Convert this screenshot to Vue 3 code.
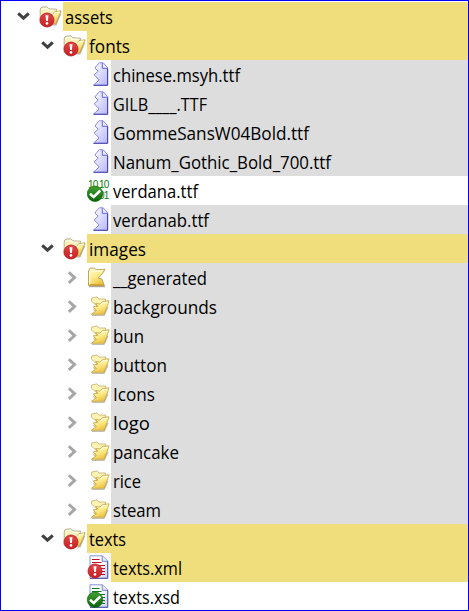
<script setup>
const rows = [
  { name: 'assets', level: 0, icon: 'open', tone: 'gold', arrow: 'down', width: 48 },
  { name: 'fonts', level: 1, icon: 'open', tone: 'gold', arrow: 'down', width: 41 },
  { name: 'chinese.msyh.ttf', level: 2, icon: 'torn', tone: 'gray', width: 127 },
  { name: 'GILB____.TTF', level: 2, icon: 'torn', tone: 'gray', width: 94 },
  { name: 'GommeSansW04Bold.ttf', level: 2, icon: 'torn', tone: 'gray', width: 196 },
  { name: 'Nanum_Gothic_Bold_700.ttf', level: 2, icon: 'torn', tone: 'gray', width: 218 },
  { name: 'verdana.ttf', level: 2, icon: 'binary', tone: 'plain', width: 85 },
  { name: 'verdanab.ttf', level: 2, icon: 'torn', tone: 'gray', width: 96 },
  { name: 'images', level: 1, icon: 'open', tone: 'gold', arrow: 'down', width: 57 },
  { name: '__generated', level: 2, icon: 'closed', tone: 'gray', arrow: 'right', width: 94 },
  { name: 'backgrounds', level: 2, icon: 'folder', tone: 'gray', arrow: 'right', width: 104 },
  { name: 'bun', level: 2, icon: 'folder', tone: 'gray', arrow: 'right', width: 31 },
  { name: 'button', level: 2, icon: 'folder', tone: 'gray', arrow: 'right', width: 54 },
  { name: 'Icons', level: 2, icon: 'folder', tone: 'gray', arrow: 'right', width: 42 },
  { name: 'logo', level: 2, icon: 'folder', tone: 'gray', arrow: 'right', width: 37 },
  { name: 'pancake', level: 2, icon: 'folder', tone: 'gray', arrow: 'right', width: 66 },
  { name: 'rice', level: 2, icon: 'folder', tone: 'gray', arrow: 'right', width: 28 },
  { name: 'steam', level: 2, icon: 'folder', tone: 'gray', arrow: 'right', width: 48 },
  { name: 'texts', level: 1, icon: 'open', tone: 'gold', arrow: 'down', width: 37 },
  { name: 'texts.xml', level: 2, icon: 'xml', tone: 'gold', width: 69 },
  { name: 'texts.xsd', level: 2, icon: 'xsd', tone: 'plain', width: 67 }
]
const hasError = (icon) => icon === 'open' || icon === 'xml'
const hasCheck = (icon) => icon === 'binary' || icon === 'xsd'
</script>

<template>
  <div class="tree">
    <svg class="defs" width="0" height="0" aria-hidden="true">
      <defs>
        <linearGradient id="paper" x1="0" y1="0" x2="1" y2="1">
          <stop offset="0" stop-color="#ffffff" /><stop offset="1" stop-color="#b5b5ff" />
        </linearGradient>
        <linearGradient id="page" x1="0" y1="0" x2="1" y2="1">
          <stop offset="0.4" stop-color="#ffffff" /><stop offset="1" stop-color="#ccd2fa" />
        </linearGradient>
        <linearGradient id="yellow" x1="0" y1="0" x2="0.5" y2="1">
          <stop offset="0" stop-color="#fffbd0" /><stop offset="0.55" stop-color="#fdec8a" /><stop offset="1" stop-color="#edc443" />
        </linearGradient>
        <linearGradient id="red" x1="0" y1="0" x2="0" y2="1">
          <stop offset="0" stop-color="#e04848" /><stop offset="1" stop-color="#c41f24" />
        </linearGradient>
        <linearGradient id="green" x1="0" y1="0" x2="0" y2="1">
          <stop offset="0" stop-color="#43a035" /><stop offset="1" stop-color="#0b6208" />
        </linearGradient>
      </defs>
    </svg>
    <div v-for="row in rows" :key="row.name" class="row" :class="'level-' + row.level">
      <svg class="arrow" width="24" height="29" viewBox="0 0 24 29">
        <path v-if="row.arrow === 'down'" class="down" d="M3.2 11.3 8.5 16.2 13.8 11.3" />
        <path v-if="row.arrow === 'right'" class="right" d="M5.8 9.3 11.6 14.6 5.8 19.9" />
      </svg>
      <svg class="icon" width="24" height="29" viewBox="0 0 24 29">
        <g v-if="row.icon === 'open'">
          <path d="M1.2 21V8Q1.2 5.5 3 5.2L8 4.8L10 6.8L17.6 7.2V20H3Z" fill="#faf0b9" stroke="#a9a084" stroke-width=".8" />
          <path d="M2.5 8Q3.5 6.3 7.5 6.3L9.5 8.3H15" fill="none" stroke="#fffde9" stroke-width="1.2" />
          <path d="M13 22.8H17L21.6 12" fill="none" stroke="#bdb8a9" stroke-width="1.2" />
          <path d="M9 12.8H13.5L16 9.6 22.1 8.8 16.7 22H8Z" fill="url(#yellow)" stroke="#ad8c38" stroke-width=".7" />
          <path d="M14 13.1 16.5 10.7 20.5 10.2" fill="none" stroke="#fffbd8" stroke-width="1.3" />
        </g>
        <g v-else-if="row.icon === 'folder'">
          <path d="M5 23.4H17L21 15" fill="none" stroke="#c3bfb5" stroke-width="1.2" />
          <path d="M4.3 9 4.8 6 10 4.9 12 7 18.6 7V17L11 20 6.5 18 10 14Z" fill="#fdf4b3" stroke="#bba35c" stroke-width=".7" />
          <path d="M8.5 11.5 13 12 16 9.4 22.1 8.8 17.3 22.3H4.3L9.4 18.6 6.3 14.8 11 14.2Z" fill="url(#yellow)" stroke="#bc9736" stroke-width=".7" />
          <path d="M13.5 13 16.5 10.6H20.7" fill="none" stroke="#fffbd8" stroke-width="1.2" />
        </g>
        <g v-else-if="row.icon === 'closed'">
          <path d="M2 23.6H18" stroke="#aaa59a" stroke-width="1.2" />
          <path d="M1.5 22.5V8L3 5.1H7.5L9 6.8 18 6.2 16 9.8 11.2 15.2 14.8 16 17.4 22.5Z" fill="url(#yellow)" stroke="#af9144" stroke-width=".8" />
          <path d="M2.8 21V10Q3 8.4 6 8.4L15.7 7.6" fill="none" stroke="#fffcdd" stroke-width="1.3" />
          <path d="M3 21.7H16.3" stroke="#d29d20" stroke-width="1" />
        </g>
        <g v-else-if="row.icon === 'torn'">
          <path d="M9.5 5.7 12.5 2.8H16.2L20.7 7.7V25.2H6.5L12.2 20 7.2 14.8 11.2 11.2 8 8Z" fill="url(#paper)" stroke="#8888ec" stroke-width="1" />
          <path d="M15.3 3.2V8.3H20.5" fill="#eeeeff" stroke="#6363df" />
          <path d="M20.6 8.5V25.3H6.7" fill="none" stroke="#4343a8" />
        </g>
        <g v-else-if="row.icon === 'binary'" class="digits">
          <text x="1" y="11.8" textLength="20.5" lengthAdjust="spacing">10 10</text>
          <text x="12" y="22.8">01</text>
        </g>
        <g v-else>
          <path d="M3 2.8H15.5L20.7 8V25.2H3Z" fill="url(#page)" stroke="#8790d8" />
          <path d="M15.2 3V8.3H20.6" fill="#e4e7ff" stroke="#7780ca" />
          <path d="M20.7 8V25.4H3" fill="none" stroke="#5159ad" />
          <path :stroke="row.icon === 'xml' ? '#c90c2b' : '#067a1d'" d="M5 6.5H12.5M5 9.5H14.5M5 12.5H18M12 15.5H18M12 18.5H18M11 21.5H18" stroke-width="1" />
        </g>
        <g v-if="hasError(row.icon)">
          <circle cx="8" cy="18" r="7" fill="url(#red)" stroke="#b91c20" stroke-width=".8" />
          <path d="M6.5 13.3H9.5L8.9 19H7.1Z" fill="#fff" />
          <circle cx="8" cy="21.4" r="1.35" fill="#fff" />
        </g>
        <g v-if="hasCheck(row.icon)">
          <circle cx="8" cy="17.8" r="7.7" fill="url(#green)" stroke="#12650e" stroke-width=".7" />
          <path d="M3 17.7 6.7 21 13.3 14.5" fill="none" stroke="#fff" stroke-width="2.5" />
        </g>
      </svg>
      <div class="label" :class="row.tone">
        <svg class="caption" width="300" height="29">
          <text x="2" y="22" :textLength="row.width" lengthAdjust="spacingAndGlyphs">{{ row.name }}</text>
        </svg>
      </div>
    </div>
  </div>
</template>

<style>
body { margin: 0; background: #fff; overflow: hidden; }
</style>

<style scoped>
.tree { box-sizing: border-box; width: 469px; height: 611px; padding-top: 1px; border: 1px solid #0000ff; overflow: hidden; background: #fff; }
.defs { display: block; }
.row { display: flex; height: 29px; }
.level-0 { padding-left: 14px; }
.level-1 { padding-left: 38px; }
.level-2 { padding-left: 62px; }
.arrow, .icon { flex: none; display: block; }
.arrow path { fill: none; stroke-width: 3; }
.arrow .down { stroke: #404040; }
.arrow .right { stroke: #a6a6a6; stroke-width: 2.9; }
.label { flex: 1; min-width: 0; overflow: hidden; }
.gold { background: #f0dd7b; }
.gray { background: #dddddd; }
.caption { display: block; }
.caption text { font-family: "Open Sans", "Noto Sans", sans-serif; font-size: 18px; fill: #000; white-space: pre; }
.digits text { font-family: "Liberation Sans", sans-serif; font-size: 10px; letter-spacing: -0.8px; fill: #087a08; }
</style>
